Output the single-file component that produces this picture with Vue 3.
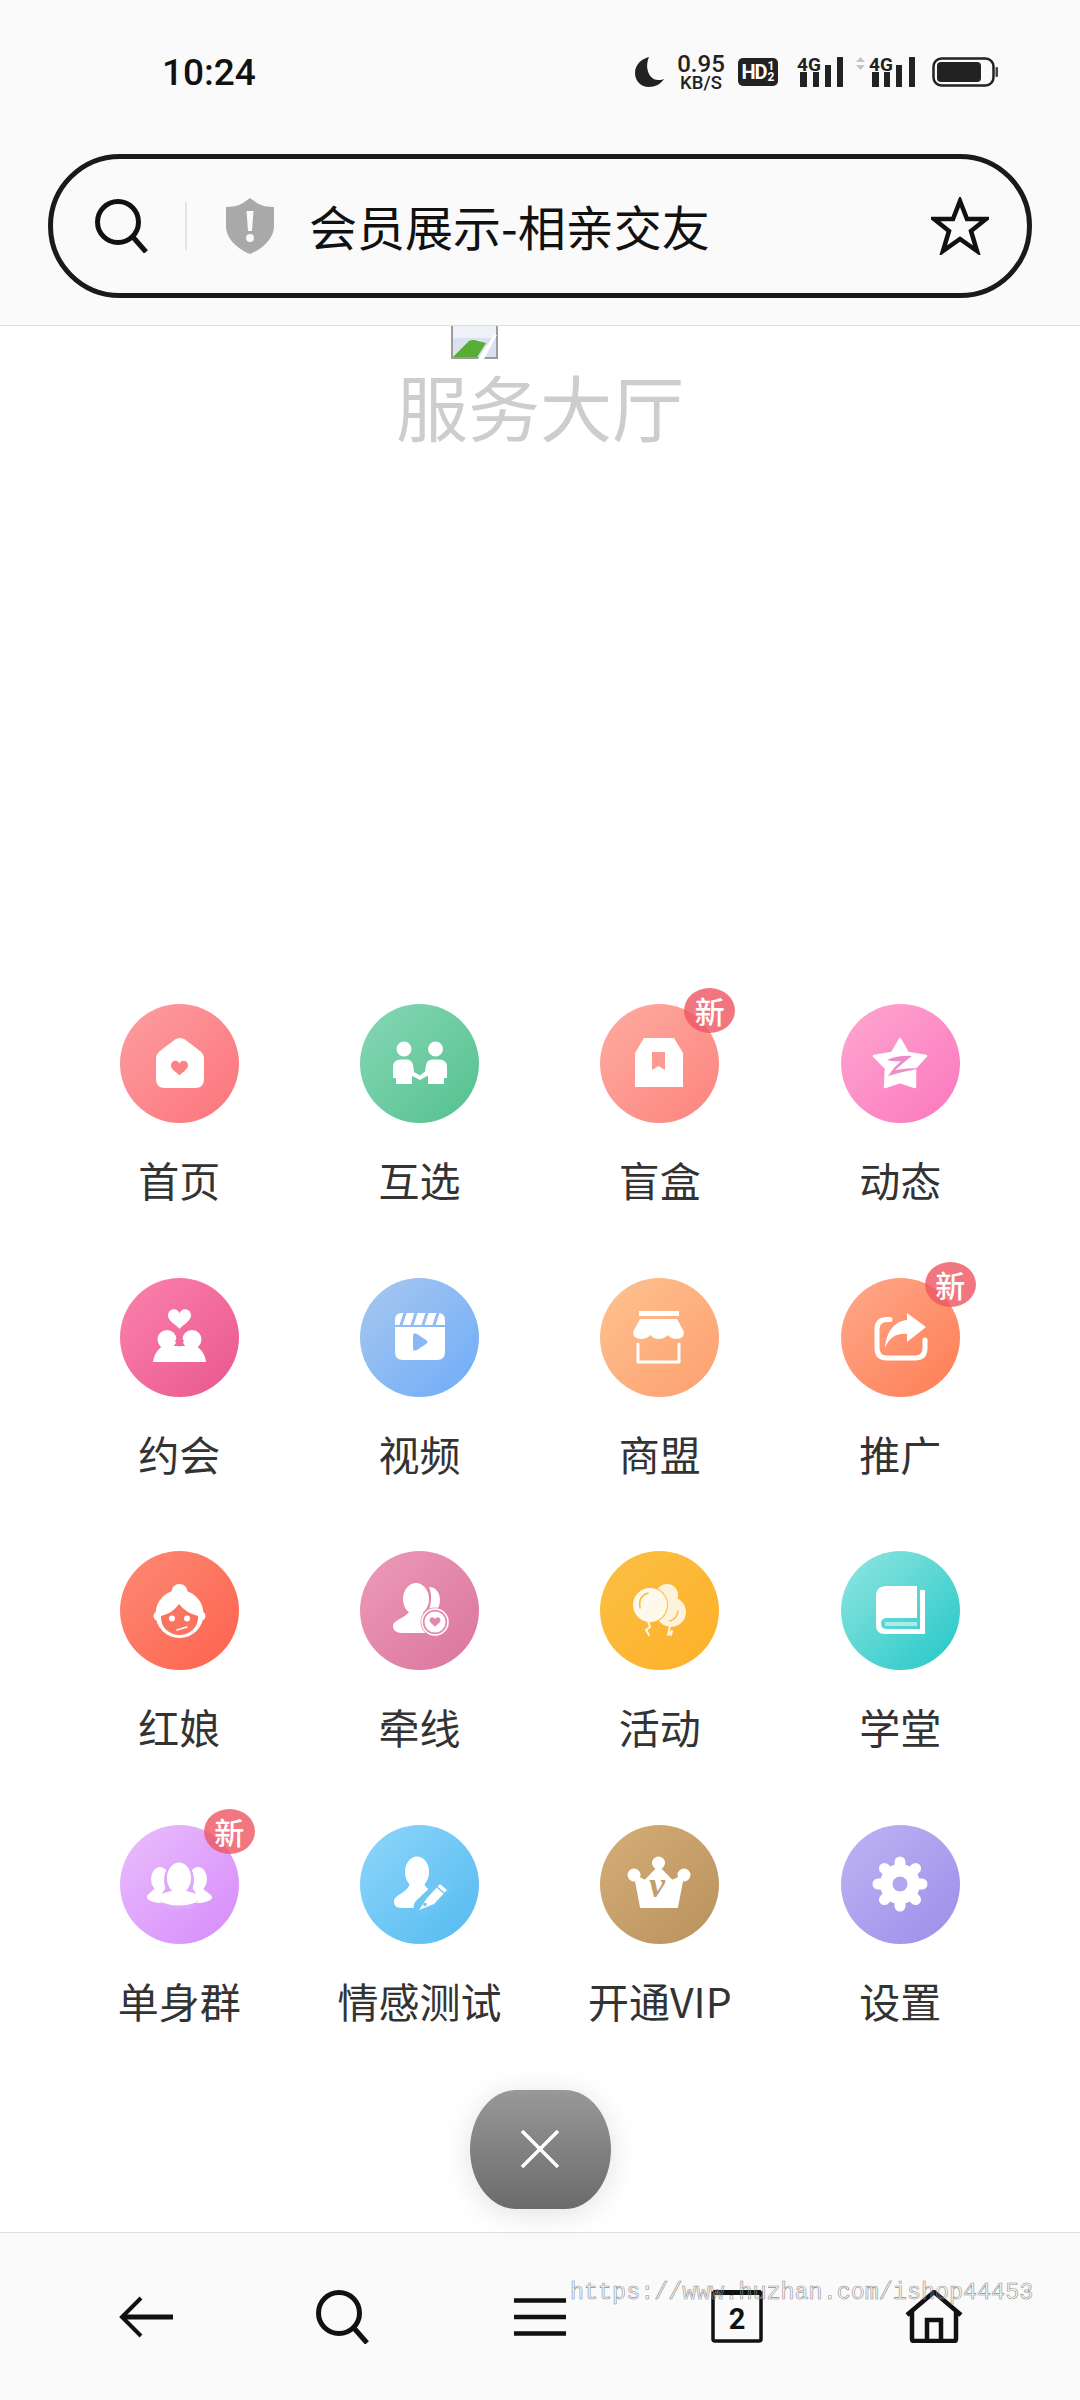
<template>
  <div class="page">
    <header class="top">
      <div class="status">
        <span class="time">10:24</span>
        <div class="status-right">
          <svg class="moon" width="29" height="30" viewBox="0 0 29 30"><path d="M14 0C6 2 0 8 0 16c0 8 6 14 14 14 6 0 12-3 15-8-2 1-4 1-6 1C15 23 9 12 14 0Z" fill="#222" /></svg>
          <div class="speed"><span class="speed-num">0.95</span><span class="speed-unit">KB/S</span></div>
          <div class="hd"><span class="hd-main">HD</span><span class="hd-frac"><i>1</i><i>2</i></span></div>
          <svg class="sig1" width="46" height="32" viewBox="0 0 46 32">
            <text x="0" y="15" class="net">4G</text>
            <rect x="3" y="16" width="7" height="15" fill="#222" /><rect x="16" y="16" width="6" height="15" fill="#222" />
            <rect x="28" y="9" width="6" height="22" fill="#222" /><rect x="40" y="1" width="6" height="30" fill="#222" />
          </svg>
          <svg class="sig2" width="59" height="32" viewBox="0 0 59 32">
            <path d="M0 6 4.500 1 9 6ZM0 9l4.500 5L9 9Z" fill="#c4c4c4" />
            <text x="13" y="15" class="net">4G</text>
            <rect x="16" y="16" width="7" height="15" fill="#222" /><rect x="28" y="16" width="6" height="15" fill="#222" />
            <rect x="40" y="9" width="6" height="22" fill="#222" /><rect x="53" y="1" width="6" height="30" fill="#222" />
          </svg>
          <svg class="batt" width="66" height="30" viewBox="0 0 66 30">
            <rect x="1.500" y="1.500" width="60" height="27" rx="8" fill="none" stroke="#222" stroke-width="2.500" />
            <rect x="5" y="5" width="44" height="20" rx="4" fill="#222" />
            <rect x="63.500" y="10" width="2.500" height="10" rx="1" fill="#444" />
          </svg>
        </div>
      </div>
      <div class="urlbar">
        <svg class="url-search" width="54" height="54" viewBox="0 0 54 54"><circle cx="23" cy="23" r="20.500" fill="none" stroke="#111" stroke-width="5" /><path d="M37 37 51 53" stroke="#111" stroke-width="5" fill="none" /></svg>
        <span class="url-div"></span>
        <svg class="shield" width="50" height="56" viewBox="0 0 50 56">
          <path d="M25 0 32 5C37 8 43 9 49 9V28C49 41 37 51 25 56 13 51 1 41 1 28V9C7 9 13 8 18 5Z" fill="#a9a9a9" />
          <path d="M21.500 13H28.500L27 33H23ZM25 36a4 4 0 1 1 0 8 4 4 0 1 1 0-8Z" fill="#fafafa" />
        </svg>
        <span class="url-text">会员展示-相亲交友</span>
        <svg class="star" width="58" height="58" viewBox="0 0 58 58"><path d="M29 4 36 22 55 22 40 34 46 54 29 42 12 54 18 34 3 22 22 22Z" fill="none" stroke="#111" stroke-width="4.500" /></svg>
      </div>
    </header>

    <main class="main">
      <svg class="broken" width="47" height="33" viewBox="0 0 47 33">
        <rect width="47" height="33" fill="#d9e2ee" />
        <rect width="47" height="12" fill="#eef2f8" />
        <path d="M2 33V31L18 15Q22 13 27 15L35 17L25 33Z" fill="#58ad37" />
        <path d="M0 0H2V33H0ZM45 0H47V33H45ZM0 31H47V33H0Z" fill="#9c9c9c" />
        <path d="M27 33 43 9 46 9 33 33Z" fill="#fff" />
      </svg>
      <h1 class="title">服务大厅</h1>

      <div class="grid">
        <div v-for="item in items" :key="item.name" class="item">
          <div class="disc" :class="item.bg">
            <svg width="119" height="119" viewBox="0 0 119 119">
              <path
                v-for="(p, i) in item.shapes"
                :key="i"
                :d="p.d"
                :fill="p.fill || 'none'"
                :stroke="p.stroke || 'none'"
                :stroke-width="p.sw || 0"
                stroke-linecap="round"
                stroke-linejoin="round"
              />
              <text v-if="item.letter" x="57" y="72" class="vip-v">{{ item.letter }}</text>
            </svg>
            <span v-if="item.isNew" class="badge">新</span>
          </div>
          <div class="label">{{ item.name }}</div>
        </div>
      </div>

      <div class="close">
        <svg width="40" height="40" viewBox="0 0 40 40"><path d="M2 2 38 38M38 2 2 38" stroke="#fff" stroke-width="3.500" fill="none" /></svg>
      </div>
    </main>

    <footer class="bottom">
      <svg width="54" height="42" viewBox="0 0 54 42"><path d="M22 2 3 21 22 40" fill="none" stroke="#111" stroke-width="4" /><path d="M3 21H54" fill="none" stroke="#111" stroke-width="5" /></svg>
      <svg width="54" height="54" viewBox="0 0 54 54"><circle cx="23" cy="23" r="20.500" fill="none" stroke="#111" stroke-width="5" /><path d="M37 37 51 53" stroke="#111" stroke-width="5" fill="none" /></svg>
      <svg width="52" height="38" viewBox="0 0 52 38"><path d="M0 2.500H52M0 19H52M0 35.500H52" stroke="#111" stroke-width="4.500" fill="none" /></svg>
      <svg width="52" height="53" viewBox="0 0 52 53">
        <path d="M2 3V49Q2 51 4 51H48Q50 51 50 49V3Z" fill="none" stroke="#111" stroke-width="3.500" />
        <path d="M2 2.500H50" stroke="#111" stroke-width="5" />
        <text x="26" y="39" class="tab-num">2</text>
      </svg>
      <svg width="58" height="53" viewBox="0 0 58 53">
        <path d="M2 25 29 2 56 25M7 21V49Q7 51 9 51H49Q51 51 51 49V21" fill="none" stroke="#111" stroke-width="4.500" />
        <path d="M22 51V30H36V51" fill="none" stroke="#111" stroke-width="4.500" />
      </svg>
      <span class="watermark">https://www.huzhan.com/ishop44453</span>
    </footer>
  </div>
</template>

<script setup>
// 菜单图标都画在 119x119 的圆里
const circle = (x, y, r, ry = r) =>
  `M${x - r} ${y}a${r} ${ry} 0 1 0 ${2 * r} 0a${r} ${ry} 0 1 0 ${-2 * r} 0Z`;

const heart = (x, y, s) =>
  `M${x} ${y + 0.85 * s}C${x - 0.5 * s} ${y + 0.4 * s} ${x - s} ${y + 0.1 * s} ${x - s} ${y - 0.3 * s}` +
  `C${x - s} ${y - 0.7 * s} ${x - 0.7 * s} ${y - 0.85 * s} ${x - 0.45 * s} ${y - 0.85 * s}` +
  `C${x - 0.25 * s} ${y - 0.85 * s} ${x - 0.08 * s} ${y - 0.7 * s} ${x} ${y - 0.5 * s}` +
  `C${x + 0.08 * s} ${y - 0.7 * s} ${x + 0.25 * s} ${y - 0.85 * s} ${x + 0.45 * s} ${y - 0.85 * s}` +
  `C${x + 0.7 * s} ${y - 0.85 * s} ${x + s} ${y - 0.7 * s} ${x + s} ${y - 0.3 * s}` +
  `C${x + s} ${y + 0.1 * s} ${x + 0.5 * s} ${y + 0.4 * s} ${x} ${y + 0.85 * s}Z`;

const gearTeeth = [0, 45, 90, 135, 180, 225, 270, 315]
  .map((deg) => {
    const a = (deg * Math.PI) / 180;
    const x1 = 59 + 15 * Math.cos(a);
    const y1 = 59 + 15 * Math.sin(a);
    const x2 = 59 + 22 * Math.cos(a);
    const y2 = 59 + 22 * Math.sin(a);
    return `M${x1} ${y1}L${x2} ${y2}`;
  })
  .join('');

const W = '#fff';

const items = [
  {
    name: '首页',
    bg: 'bg-home',
    shapes: [
      { d: 'M55 35.500Q60 32.500 65 35.500L80 47Q84 50 84 55V75Q84 84 75 84H45Q36 84 36 75V55Q36 50 40 47Z', fill: W },
      { d: heart(59.5, 64, 8.5), fill: '#fb8388' }
    ]
  },
  {
    name: '互选',
    bg: 'bg-pick',
    shapes: [
      { d: circle(44, 45, 7.5), fill: W },
      { d: circle(75.5, 45, 7.5), fill: W },
      { d: 'M33 74V63Q33 55.500 41 55.500H46Q52 55.500 53 61L54 68L60 71.500L65 67.500L66 61Q67 55.500 73 55.500H79Q87 55.500 87 63V74H84V80H68V71.500L60 76L52 72V80H36V74Z', fill: W }
    ]
  },
  {
    name: '盲盒',
    bg: 'bg-box',
    isNew: true,
    shapes: [
      { d: 'M44 34H74L83 49V83H35V49Z', fill: W },
      { d: 'M52 48H65V66L58.500 62L52 66Z', fill: '#fd9a91' }
    ]
  },
  {
    name: '动态',
    bg: 'bg-feed',
    shapes: [
      { d: 'M59 35 67 49 85 52 74 64 74 83 59 78 44 83 45 64 33 52 51 49Z', fill: W, stroke: W, sw: 2.5 },
      { d: 'M46 56Q58 51 71 52Q63 58 54 66Q66 64 81 64Q64 67 47 72Q52 64 60 57Q52 58 46 56Z', fill: '#ee8cc8' }
    ]
  },
  {
    name: '约会',
    bg: 'bg-date',
    shapes: [
      { d: heart(59.5, 41, 11.5), fill: W },
      { d: circle(47, 61.5, 9.5), fill: W },
      { d: circle(72, 61.5, 9.5), fill: W },
      { d: 'M33 84C34 76 38 71 43 68H76C81 71 85 76 86 84Z', fill: W },
      { d: 'M59.500 57 64 63 59.500 69 55 63Z', fill: '#ef6c9c' }
    ]
  },
  {
    name: '视频',
    bg: 'bg-video',
    shapes: [
      { d: 'M42 35H78Q85 35 85 42V47H35V42Q35 35 42 35Z', fill: W },
      { d: 'M45 35 41 47M56 35 52 47M67 35 63 47M78 35 74 47', stroke: '#95bdf2', sw: 3 },
      { d: 'M35 49H85V74Q85 82 77 82H43Q35 82 35 74Z', fill: W },
      { d: 'M53 58Q53 54 57 56L66 62Q69 64 66 66L57 72Q53 74 53 70Z', fill: '#8ab7f5' }
    ]
  },
  {
    name: '商盟',
    bg: 'bg-shop',
    shapes: [
      { d: 'M39 33H79V38H39Z', fill: W },
      { d: 'M40 41H77L84 54Q84 61 76.500 61Q71 61 67.500 57Q64 61 59 61Q53.500 61 50.500 57Q47 61 41 61Q33 61 33 54Z', fill: W },
      { d: 'M38 66V84H79V66', stroke: W, sw: 3 }
    ]
  },
  {
    name: '推广',
    bg: 'bg-share',
    isNew: true,
    shapes: [
      { d: 'M49 41.500H46Q36 41.500 36 51.500V70Q36 80 46 80H74Q84 80 84 70V62', stroke: W, sw: 5 },
      { d: 'M66 35 85 49 66 64V56C55 55 48 60 44 70C45 55 53 43 66 42Z', fill: W }
    ]
  },
  {
    name: '红娘',
    bg: 'bg-mm',
    shapes: [
      { d: circle(59.5, 41, 8), fill: W },
      { d: circle(59.5, 63, 24), fill: W },
      { d: circle(38, 65, 4.5), fill: W },
      { d: circle(81, 65, 4.5), fill: W },
      { d: 'M41 65Q53 62 59 53Q66 62 78 65V67A18.500 17 0 0 1 41 67Z', fill: '#fb7460' },
      { d: circle(52, 67.5, 3), fill: W },
      { d: circle(67, 67.5, 3), fill: W },
      { d: 'M57 79 67 76', stroke: W, sw: 1.5 }
    ]
  },
  {
    name: '牵线',
    bg: 'bg-link',
    shapes: [
      { d: 'M69 36C76 36 80 42 80 49C80 54 78 58 75 61H68C72 52 72 43 69 36Z', fill: W },
      { d: circle(56, 48, 13, 16), fill: W },
      { d: 'M50 60H62C64 65 68 67 72 70V82H42C35 82 33 78 33 75C33 69 44 68 50 60Z', fill: W },
      { d: circle(75, 71, 14.5), fill: '#e48cb0' },
      { d: circle(75, 71, 13), stroke: W, sw: 1.5 },
      { d: circle(75, 71, 10.5), fill: W },
      { d: heart(75, 71, 5.5), fill: '#e586ac' }
    ]
  },
  {
    name: '活动',
    bg: 'bg-event',
    shapes: [
      { d: circle(67, 44, 11), fill: '#fdf3dc' },
      { d: circle(71, 61, 15), fill: '#fdf3dc' },
      { d: 'M70 75 68 84 72 80 71 84', stroke: '#fdf3dc', sw: 2 },
      { d: circle(50, 54, 18), fill: '#fbba42' },
      { d: circle(50, 54, 17), fill: '#fff9ec' },
      { d: 'M48 70 50 76 46 79 49 84', stroke: '#fff9ec', sw: 2 },
      { d: 'M40 57Q38 45 48 42', stroke: '#fbba42', sw: 1.500 },
      { d: 'M70 70Q77 68 78 60', stroke: '#fbba42', sw: 1.500 }
    ]
  },
  {
    name: '学堂',
    bg: 'bg-school',
    shapes: [
      { d: 'M35 45Q35 35 45 35H76V67H46Q40 67 40 72.500Q40 78 46 78H76V83H44Q35 83 35 74Z', fill: W },
      { d: 'M79 39H84V83H76V78H79Z', fill: W },
      { d: 'M44 71H76V75H44Z', fill: '#a9ecE8' }
    ]
  },
  {
    name: '单身群',
    bg: 'bg-group',
    isNew: true,
    shapes: [
      { d: circle(40, 54, 9, 12), fill: W },
      { d: 'M35 63H46L43 78C35 78 27 76 27 72C27 69 32 67 35 63Z', fill: W },
      { d: circle(78, 54, 9, 12), fill: W },
      { d: 'M72 63H83C85 67 92 69 92 72C92 76 84 78 76 78Z', fill: W },
      { d: circle(59, 55, 15, 19), fill: '#dfa9fb' },
      { d: 'M40 76Q42 64 50 60H68Q76 64 78 76L70 84H48Z', fill: '#dfa9fb' },
      { d: circle(59, 53, 12, 15.5), fill: W },
      { d: circle(59, 73, 20, 7.5), fill: W },
      { d: 'M52 60H66V70H52Z', fill: W }
    ]
  },
  {
    name: '情感测试',
    bg: 'bg-test',
    shapes: [
      { d: circle(57, 47, 12, 15.5), fill: W },
      { d: 'M50 58H64C66 64 70 65 75 67L62 83H42C36 83 34 80 34 77C34 69 47 69 50 58Z', fill: W },
      { d: 'M85 60 62 82', stroke: '#6dc6f3', sw: 17 },
      { d: 'M67 73 80 59 87 65 74 79 59 85Z', fill: W },
      { d: 'M77 62 84 68', stroke: '#6dc6f3', sw: 1.5 },
      { d: circle(65, 79.5, 1.8), fill: '#6dc6f3' }
    ]
  },
  {
    name: '开通VIP',
    bg: 'bg-vip',
    letter: 'v',
    shapes: [
      { d: circle(58.5, 38, 6.5), fill: W },
      { d: circle(34, 50, 6.5), fill: W },
      { d: circle(84, 50, 6.5), fill: W },
      { d: 'M41 82 35 51 45 56 58.500 42 72 56 83 51 77 82Z', fill: W, stroke: W, sw: 2 }
    ]
  },
  {
    name: '设置',
    bg: 'bg-set',
    shapes: [
      { d: gearTeeth, stroke: W, sw: 11 },
      { d: circle(59, 59, 20), fill: W },
      { d: circle(59, 59, 7.5), fill: '#b1a6f0' }
    ]
  }
];
</script>

<style scoped>
.page {
  width: 1080px;
  height: 2400px;
  display: flex;
  flex-direction: column;
  background: #fff;
  font-family: "Noto Sans CJK SC", "Noto Sans", sans-serif;
  overflow: hidden;
}

.top {
  height: 326px;
  box-sizing: border-box;
  background: #fafafa;
  border-bottom: 1px solid #dedede;
  padding-top: 52px;
}

.status {
  height: 40px;
  display: flex;
  align-items: center;
  padding: 0 82px 0 162px;
}

.time {
  font-family: Roboto, sans-serif;
  font-size: 37px;
  font-weight: 500;
  color: #111;
}

.status-right {
  margin-left: auto;
  display: flex;
  align-items: center;
  color: #222;
  font-family: Roboto, sans-serif;
}

.speed {
  display: flex;
  flex-direction: column;
  align-items: center;
  margin-left: 13px;
  width: 48px;
  font-weight: 500;
}

.speed-num {
  font-size: 24px;
  line-height: 22px;
}

.speed-unit {
  font-size: 18.500px;
  line-height: 16px;
}

.hd {
  margin-left: 13px;
  width: 40px;
  height: 28px;
  border-radius: 5px;
  background: #222;
  color: #fff;
  display: flex;
  align-items: center;
  justify-content: center;
  gap: 1px;
}

.hd-main {
  font-size: 20px;
  font-weight: 700;
  letter-spacing: -1px;
}

.hd-frac {
  display: flex;
  flex-direction: column;
  font-size: 12px;
  line-height: 11px;
  font-weight: 700;
}

.hd-frac i {
  font-style: normal;
}

.sig1 {
  margin-left: 19px;
  overflow: visible;
}

.sig2 {
  margin-left: 13px;
  overflow: visible;
}

.batt {
  margin-left: 17px;
}

.net {
  font-family: Roboto, sans-serif;
  font-size: 19px;
  font-weight: 700;
  fill: #222;
}

.urlbar {
  margin: 62px 48px 0;
  height: 144px;
  box-sizing: border-box;
  border: 5px solid #1a1a1a;
  border-radius: 72px;
  display: flex;
  align-items: center;
  padding: 0 38px 0 42px;
}

.url-div {
  width: 2px;
  height: 48px;
  margin-left: 36px;
  background: #e4e4e4;
}

.shield {
  margin-left: 38px;
}

.url-text {
  margin-left: 34px;
  margin-top: -3px;
  font-size: 48px;
  color: #111;
  white-space: nowrap;
}

.star {
  margin-left: auto;
}

.main {
  flex: 1;
  display: flex;
  flex-direction: column;
  align-items: center;
  min-height: 0;
}

.broken {
  display: block;
  align-self: flex-start;
  margin-left: 451px;
}

.title {
  margin: 4px 0 0;
  font-size: 72px;
  line-height: 84px;
  font-weight: 400;
  color: #cdcdcd;
}

.grid {
  margin: 557px 1px 0 0;
  width: 961px;
  display: grid;
  grid-template-columns: repeat(4, 240.330px);
  row-gap: 76.670px;
}

.item {
  display: flex;
  flex-direction: column;
  align-items: center;
}

.disc {
  position: relative;
  width: 119px;
  height: 119px;
  border-radius: 50%;
}

.disc svg {
  display: block;
}

.label {
  margin-top: 34px;
  font-size: 41px;
  line-height: 44px;
  color: #333;
  white-space: nowrap;
}

.badge {
  position: absolute;
  left: 84px;
  top: -16px;
  width: 51px;
  height: 45px;
  border-radius: 50%;
  background: rgba(238, 88, 100, 0.82);
  color: #fff;
  font-size: 30px;
  font-weight: 500;
  line-height: 45px;
  text-align: center;
}

.vip-v {
  font-family: "Liberation Serif", serif;
  font-size: 36px;
  font-style: italic;
  font-weight: 700;
  fill: #c39d6b;
  text-anchor: middle;
}

.tab-num {
  font-family: Roboto, sans-serif;
  font-size: 29px;
  font-weight: 700;
  fill: #111;
  text-anchor: middle;
}

.bg-home { background: linear-gradient(135deg, #fc9ea0, #fc747b); }
.bg-pick { background: linear-gradient(135deg, #86d7b5, #54c18e); }
.bg-box { background: linear-gradient(135deg, #fdaca1, #fd837e); }
.bg-feed { background: linear-gradient(135deg, #fea8d0, #fb76bd); }
.bg-date { background: linear-gradient(135deg, #fb82ac, #e9578e); }
.bg-video { background: linear-gradient(135deg, #a9c8ef, #6dacf9); }
.bg-shop { background: linear-gradient(135deg, #fdc391, #fe9e6e); }
.bg-share { background: linear-gradient(135deg, #fea98a, #fe7d54); }
.bg-mm { background: linear-gradient(135deg, #fd8a74, #fd624d); }
.bg-link { background: linear-gradient(135deg, #ed9bb9, #da749c); }
.bg-event { background: linear-gradient(135deg, #fbc044, #feaf28); }
.bg-school { background: linear-gradient(135deg, #92e6e1, #22c7c7); }
.bg-group { background: linear-gradient(135deg, #e9befc, #d68bfb); }
.bg-test { background: linear-gradient(135deg, #8fd6fb, #53baef); }
.bg-vip { background: linear-gradient(135deg, #d4ad77, #b9915d); }
.bg-set { background: linear-gradient(135deg, #bfb4f4, #9b8eea); }

.close {
  position: relative;
  z-index: 1;
  margin-top: 68px;
  width: 141px;
  height: 119px;
  border-radius: 46px / 59.5px;
  background: linear-gradient(#989898, #6b6b6b);
  box-shadow: 0 4px 30px rgba(0, 0, 0, 0.12);
  display: flex;
  align-items: center;
  justify-content: center;
}

.bottom {
  position: relative;
  height: 168px;
  box-sizing: border-box;
  background: #fafafa;
  border-top: 1px solid #dedede;
  padding: 0 47px;
  display: grid;
  grid-template-columns: repeat(5, 197px);
  justify-items: center;
  align-items: center;
}

.watermark {
  position: absolute;
  left: 570px;
  top: 46px;
  font-family: "Liberation Mono", monospace;
  font-size: 23.400px;
  line-height: 28px;
  color: transparent;
  -webkit-text-stroke: 0.6px #909090;
  white-space: nowrap;
}
</style>
